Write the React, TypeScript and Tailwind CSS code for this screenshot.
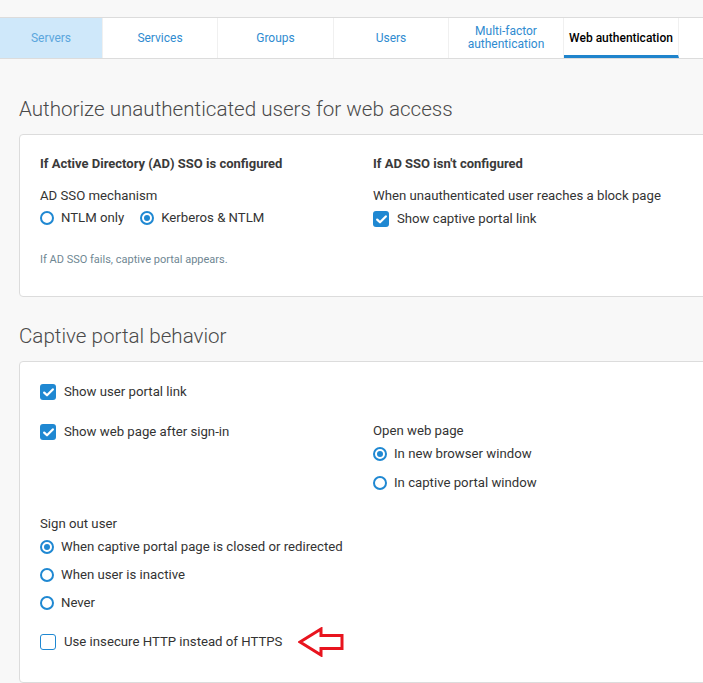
const font = { fontFamily: "Roboto, 'Liberation Sans', sans-serif" };

function Radio({ checked, label }: { checked?: boolean; label: string }) {
  return (
    <label className="flex items-center gap-[7px] h-4">
      <span className="w-[14px] h-[14px] rounded-full border-2 border-[#1f88d2] bg-white flex items-center justify-center">
        {checked && <span className="w-[6px] h-[6px] rounded-full bg-[#1f88d2]" />}
      </span>
      <span className="text-[13.2px] text-[#333]">{label}</span>
    </label>
  );
}

function Check({ checked, label }: { checked?: boolean; label: string }) {
  return (
    <label className="flex items-center gap-2 h-4">
      {checked ? (
        <span className="w-4 h-4 rounded-[3px] bg-[#1f88d2] flex items-center justify-center">
          <svg width="11" height="9" viewBox="0 0 11 9">
            <path d="M1.2 4.6 L4 7.3 L9.8 1.4" fill="none" stroke="white" strokeWidth="2.2" strokeLinecap="round" strokeLinejoin="round" />
          </svg>
        </span>
      ) : (
        <span className="w-4 h-4 rounded-[3px] border-[1.5px] border-[#1f88d2] bg-white" />
      )}
      <span className="text-[13.2px] text-[#333]">{label}</span>
    </label>
  );
}

const tabs = [
  { name: "Servers", w: "w-[103px]" },
  { name: "Services", w: "w-[115px]" },
  { name: "Groups", w: "w-[116px]" },
  { name: "Users", w: "w-[115px]" },
  { name: "Multi-factor authentication", w: "w-[115px]" },
  { name: "Web authentication", w: "w-[115px]" },
];

export default function App() {
  return (
    <div className="min-h-[683px] w-full bg-[#f8f8f8] overflow-hidden" style={font}>
      <div className="h-[17px]" />
      <div className="h-[42px] bg-white border-y border-[#dcdcdc] flex">
        {tabs.map((t, i) => (
          <div
            key={t.name}
            className={`${t.w} h-full flex items-center justify-center text-center text-[12px] leading-[13px] border-r border-[#f0f0f0] ${
              i === 0 ? "bg-[#cfe8fa] text-[#5ba6dd]" : i === 5 ? "text-black font-medium border-b-[3px] border-b-[#1f84cc] pt-[3px]" : "text-[#2f8bd0]"
            }`}
          >
            {i === 4 ? (
              <span>
                Multi-factor
                <br />
                authentication
              </span>
            ) : (
              t.name
            )}
          </div>
        ))}
      </div>

      <div className="pl-[19px]">
        <h2 className="mt-[38px] text-[20.6px] leading-6 font-light text-[#4a4a4a]">Authorize unauthenticated users for web access</h2>
        <div className="mt-[13px] -mr-4 h-[163px] bg-white border border-[#dcdcdc] rounded-[4px] pl-5 pt-[21px] grid grid-cols-[333px_1fr]">
          <div>
            <div className="text-[13px] leading-4 font-bold text-[#3a3a3a]">If Active Directory (AD) SSO is configured</div>
            <div className="mt-4 text-[13.2px] leading-4 text-[#333]">AD SSO mechanism</div>
            <div className="mt-[6px] flex gap-4">
              <Radio label="NTLM only" />
              <Radio checked label="Kerberos & NTLM" />
            </div>
            <div className="mt-[27px] text-[11px] leading-[14px] text-[#6f8793]">If AD SSO fails, captive portal appears.</div>
          </div>
          <div>
            <div className="text-[13px] leading-4 font-bold text-[#3a3a3a]">If AD SSO isn't configured</div>
            <div className="mt-4 text-[13.2px] leading-4 text-[#333]">When unauthenticated user reaches a block page</div>
            <div className="mt-[7px]">
              <Check checked label="Show captive portal link" />
            </div>
          </div>
        </div>

        <h2 className="mt-[27px] text-[20.6px] leading-6 font-light text-[#4a4a4a]">Captive portal behavior</h2>
        <div className="mt-[13px] -mr-4 h-[322px] bg-white border border-[#dcdcdc] rounded-[4px] pl-5 pt-[22px]">
          <Check checked label="Show user portal link" />
          <div className="mt-6 grid grid-cols-[333px_1fr]">
            <div>
              <Check checked label="Show web page after sign-in" />
            </div>
            <div className="-mt-px">
              <div className="text-[13.2px] leading-4 text-[#333]">Open web page</div>
              <div className="mt-[7px] flex flex-col gap-[13px]">
                <Radio checked label="In new browser window" />
                <Radio label="In captive portal window" />
              </div>
            </div>
          </div>
          <div className="mt-[25px] text-[13.2px] leading-4 text-[#333]">Sign out user</div>
          <div className="mt-[7px] flex flex-col gap-3">
            <Radio checked label="When captive portal page is closed or redirected" />
            <Radio label="When user is inactive" />
            <Radio label="Never" />
          </div>
          <div className="mt-4 flex items-center">
            <Check label="Use insecure HTTP instead of HTTPS" />
            <svg className="ml-[16px]" width="46" height="30" viewBox="0 0 46 30">
              <path d="M2 15 L23 2 L23 8.5 L44 8.5 L44 21.5 L23 21.5 L23 28 Z" fill="white" stroke="#e8141e" strokeWidth="3" strokeLinejoin="miter" />
            </svg>
          </div>
        </div>
      </div>
    </div>
  );
}
